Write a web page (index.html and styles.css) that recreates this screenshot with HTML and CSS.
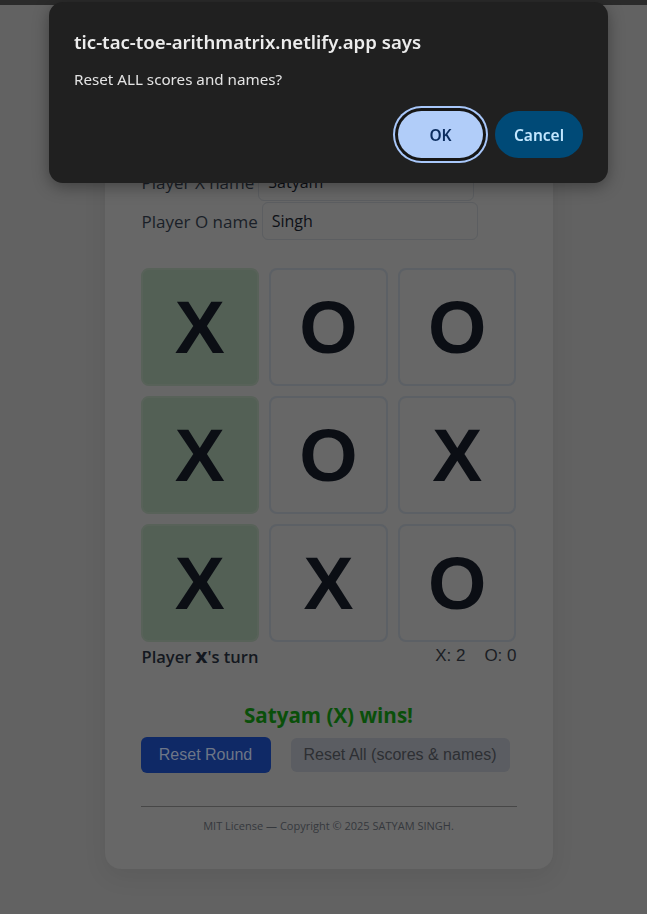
FILE: index.html
```html
<!DOCTYPE html>
<html lang="en">
<head>
<meta charset="utf-8">
<title>Tic-Tac-Toe</title>
<link rel="stylesheet" href="styles.css">
</head>
<body>
<div class="topbar"></div>
<main class="page">
  <section class="card">
    <div class="names">
      <div class="name-row">
        <label class="name-label" for="px">Player X name</label>
        <input class="name-input" id="px" type="text" value="Satyam">
      </div>
      <div class="name-row">
        <label class="name-label" for="po">Player O name</label>
        <input class="name-input" id="po" type="text" value="Singh">
      </div>
    </div>

    <div class="board">
      <button class="cell win">X</button>
      <button class="cell">O</button>
      <button class="cell">O</button>
      <button class="cell win">X</button>
      <button class="cell">O</button>
      <button class="cell">X</button>
      <button class="cell win">X</button>
      <button class="cell">X</button>
      <button class="cell">O</button>
    </div>

    <div class="status">
      <span class="turn">Player <b>X</b>'s turn</span>
      <span class="scores"><span>X: 2</span><span>O: 0</span></span>
    </div>

    <p class="winner">Satyam (X) wins!</p>

    <div class="actions">
      <button class="btn btn-primary">Reset Round</button>
      <button class="btn btn-secondary">Reset All (scores &amp; names)</button>
    </div>

    <hr class="rule">
    <p class="footer">MIT License — Copyright © 2025 SATYAM SINGH.</p>
  </section>
</main>

<div class="dialog" role="dialog">
  <h2 class="dialog-title">tic-tac-toe-arithmatrix.netlify.app says</h2>
  <p class="dialog-msg">Reset ALL scores and names?</p>
  <div class="dialog-actions">
    <button class="dbtn dbtn-ok">OK</button>
    <button class="dbtn dbtn-cancel">Cancel</button>
  </div>
</div>
</body>
</html>
```
FILE: styles.css
```css
* { box-sizing: border-box; }

body {
  margin: 0;
  background: #626262;
  font-family: "Open Sans", "Noto Sans", "DejaVu Sans", sans-serif;
  color: #1c222c;
}

.topbar {
  height: 5px;
  background: #2b2b2b;
}

.page {
  display: flex;
  justify-content: center;
  padding: 11px 0 40px 10px;
}

.card {
  width: 448px;
  background: #676767;
  border-radius: 16px;
  padding: 147px 36px 35px;
  box-shadow: 0 8px 24px rgba(0, 0, 0, 0.07);
}

.names {
  display: flex;
  flex-direction: column;
  gap: 1px;
}

.name-row {
  display: flex;
  align-items: center;
  gap: 4px;
  padding-left: 1px;
}

.name-label {
  font-size: 17px;
  color: #1a1f28;
}

.name-input {
  width: 216px;
  height: 38px;
  border: 1px solid #5c5e61;
  border-radius: 6px;
  background: #676767;
  padding: 0 9px;
  font-family: "Open Sans", "Noto Sans", sans-serif;
  font-size: 16px;
  color: #0d1016;
}

.board {
  display: grid;
  grid-template-columns: repeat(3, 1fr);
  grid-auto-rows: 118px;
  gap: 10px;
  margin-top: 28px;
}

.cell {
  border: 2px solid #5c6065;
  border-radius: 8px;
  background: #676767;
  font-family: "Liberation Sans", Arial, sans-serif;
  font-weight: 700;
  font-size: 75px;
  color: #0b0e14;
  padding: 0;
  display: flex;
  align-items: center;
  justify-content: center;
}

.cell.win {
  background: #536055;
  border-color: #586259;
}

.status {
  display: flex;
  justify-content: space-between;
  align-items: center;
  margin-top: 4px;
  height: 20px;
}

.turn {
  font-size: 16.5px;
  font-weight: 600;
  color: #141820;
  padding-left: 1px;
}

.turn b { font-weight: 800; }

.scores {
  display: flex;
  gap: 19px;
  font-family: "Liberation Sans", Arial, sans-serif;
  font-size: 17px;
  color: #1b1e24;
}

.winner {
  margin: 35px 0 0;
  text-align: center;
  font-size: 20.6px;
  line-height: 28px;
  font-weight: 700;
  color: #0a4f0a;
}

.actions {
  display: flex;
  align-items: center;
  gap: 20px;
  margin-top: 8px;
}

.btn {
  font-family: "Liberation Sans", Arial, sans-serif;
  font-size: 16px;
  border: none;
  border-radius: 6px;
}

.btn-primary {
  width: 130px;
  height: 36px;
  background: #0f2966;
  color: #6e7687;
}

.btn-secondary {
  width: 219px;
  height: 34px;
  background: #5b5d62;
  color: #2d2f33;
}

.rule {
  margin: 33px 0 0;
  border: none;
  border-top: 1px solid #474747;
}

.footer {
  margin: 11px 0 0;
  text-align: center;
  font-size: 11px;
  line-height: 16px;
  color: #35383d;
}

/* Browser confirm dialog overlay */
.dialog {
  position: fixed;
  left: 49px;
  top: 2px;
  width: 559px;
  height: 181px;
  background: #202020;
  border-radius: 14px;
  padding: 28px 25px 0;
  box-shadow: 0 4px 16px rgba(0, 0, 0, 0.35);
  font-family: "Noto Sans", "Open Sans", sans-serif;
}

.dialog-title {
  margin: 0;
  font-size: 18.6px;
  line-height: 24px;
  font-weight: 600;
  color: #ececec;
}

.dialog-msg {
  margin: 15px 0 0;
  font-size: 15.2px;
  line-height: 20px;
  color: #e3e3e3;
}

.dialog-actions {
  display: flex;
  justify-content: flex-end;
  gap: 12px;
  margin-top: 22px;
}

.dbtn {
  height: 47px;
  border: none;
  border-radius: 24px;
  font-family: "Noto Sans", "Open Sans", sans-serif;
  font-size: 15.5px;
  font-weight: 600;
}

.dbtn-ok {
  width: 85px;
  background: #b1cdf9;
  color: #0b2c5e;
  box-shadow: 0 0 0 3px #161616, 0 0 0 5px #a8c7fa;
}

.dbtn-cancel {
  width: 88px;
  background: #004a77;
  color: #c2e7ff;
}
```
